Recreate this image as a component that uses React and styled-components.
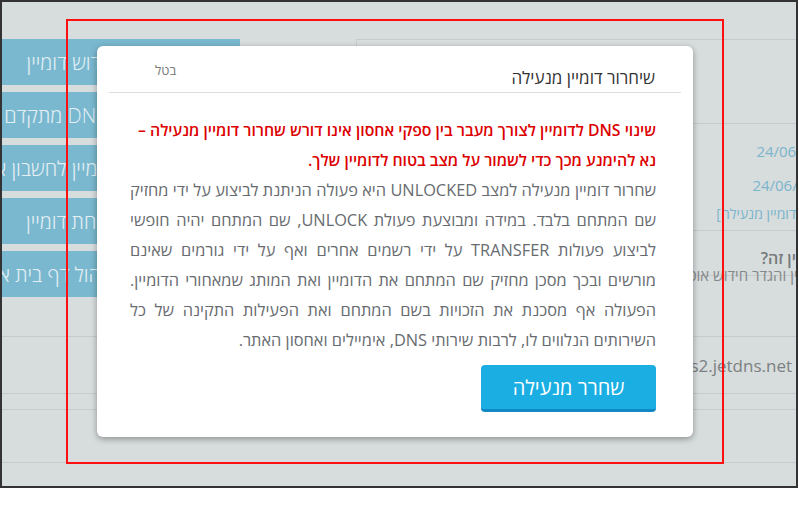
import styled, { createGlobalStyle } from 'styled-components'

const GlobalStyle = createGlobalStyle`
    body {
        margin: 0;
        background: #fff;
        font-family: "Open Sans", "Liberation Sans", sans-serif;
    }
`

const Frame = styled.div`
    position: relative;
    width: 798px;
    height: 488px;
    box-sizing: border-box;
    border: 2px solid #333;
    background: #d7dcdc;
    overflow: hidden;
`
const Page = styled.div`
    padding-top: 37px;
    direction: ltr;
`
const Upper = styled.div`
    display: flex;
    height: 297px;
`
const Sidebar = styled.div`
    width: 300px;
    margin-left: -62px;
    display: flex;
    flex-direction: column;
    gap: 7px;
    flex-shrink: 0;
`
const SideButton = styled.div`
    height: 46px;
    box-sizing: border-box;
    padding-right: ${p => p.$shift * 2}px;
    background: #79b8cf;
    color: #e3eff3;
    font-size: 20px;
    font-weight: 300;
    display: flex;
    align-items: center;
    justify-content: center;
    direction: rtl;
    white-space: nowrap;
`
const Panel = styled.div`
    margin-left: 116px;
    width: 540px;
    flex-shrink: 0;
    border-top: 1px solid #c6cccd;
    border-left: 1px solid #c6cccd;
    direction: rtl;
`
const PanelRow = styled.div`
    box-sizing: border-box;
    height: ${p => p.$h}px;
    border-bottom: ${p => (p.$last ? 'none' : '1px solid #c6cccd')};
    display: flex;
    flex-direction: column;
`
const DateText = styled.div`
    color: #7ab5cd;
    font-size: ${p => p.$size || 15}px;
    line-height: 20px;
    margin-top: ${p => p.$top}px;
    padding-right: ${p => p.$pad}px;
    white-space: nowrap;
`
const Question = styled.div`
    color: #75797b;
    font-size: 16px;
    font-weight: 600;
    line-height: 18px;
    margin-top: 18px;
    padding-right: 30px;
    white-space: nowrap;
`
const Hint = styled.div`
    color: #85898b;
    font-size: 15px;
    line-height: 16px;
    padding-right: 12px;
    white-space: nowrap;
`
const Lower = styled.div`
    display: flex;
    flex-direction: column;
`
const LineRow = styled.div`
    height: ${p => p.$h}px;
    border-top: 1px solid #c6cccd;
    display: flex;
    align-items: center;
    justify-content: flex-end;
    padding-right: 4px;
    color: #7c8082;
    font-size: 17px;
`

const Modal = styled.div`
    position: absolute;
    left: 95px;
    top: 44px;
    width: 596px;
    height: 391px;
    box-sizing: border-box;
    background: #fff;
    border-radius: 6px;
    box-shadow: 0 2px 6px rgba(0, 0, 0, 0.35);
    display: flex;
    flex-direction: column;
    direction: rtl;
`
const Header = styled.div`
    margin: 0 12px;
    height: 47px;
    box-sizing: border-box;
    border-bottom: 1px solid #dcdfe0;
    display: flex;
    justify-content: space-between;
    align-items: flex-start;
    padding: 0 26px 0 46px;
`
const Title = styled.div`
    margin-top: 20px;
    font-size: 17px;
    line-height: 24px;
    color: #333;
`
const Cancel = styled.div`
    margin-top: 15px;
    font-size: 13px;
    line-height: 18px;
    color: #7a7a7a;
`
const Content = styled.div`
    padding: 0 37px 0 33px;
    line-height: 30px;
`
const Warning = styled.p`
    margin: 22px 0 0;
    font-size: 15.8px;
    color: #dc0000;
    font-weight: 600;
`
const Info = styled.p`
    margin: 0;
    font-size: 16.35px;
    color: #676b70;
    text-align: justify;
`
const Footer = styled.div`
    margin-top: auto;
    padding: 0 37px 25px;
    display: flex;
`
const ReleaseButton = styled.button`
    width: 175px;
    height: 47px;
    border: none;
    border-bottom: 3px solid #1288c4;
    border-radius: 4px;
    background: #1aaee3;
    color: #fff;
    font-family: inherit;
    font-size: 20px;
    padding: 0;
`
const Highlight = styled.div`
    position: absolute;
    left: 64px;
    top: 17px;
    width: 658px;
    height: 445px;
    box-sizing: border-box;
    border: 2px solid #ff1010;
    pointer-events: none;
`

const menu = [
    { label: 'חידוש דומיין', shift: 18 },
    { label: 'ניהול DNS מתקדם', shift: 12 },
    { label: 'העברת דומיין לחשבון אחר', shift: 17 },
    { label: 'הקשחת דומיין', shift: 10 },
    { label: 'ניהול דף בית אישי', shift: 45 },
]

const App = () => {
    return (
        <>
            <GlobalStyle />
            <Frame>
                <Page>
                    <Upper>
                        <Sidebar>
                            {menu.map(item => (
                                <SideButton key={item.label} $shift={item.shift}>{item.label}</SideButton>
                            ))}
                        </Sidebar>
                        <Panel>
                            <PanelRow $h={84} />
                            <PanelRow $h={107}>
                                <DateText $top={17} $pad={61}>24/06/2025</DateText>
                                <DateText $top={14} $pad={65}>24/06/2026</DateText>
                                <DateText $top={9} $pad={41} $size={14}>[לשחרור הדומיין מנעילה]</DateText>
                            </PanelRow>
                            <PanelRow $h={45}>
                                <Question>חידוש דומיין זה?</Question>
                                <Hint>חדש את הדומיין והגדר חידוש אוטומטי</Hint>
                            </PanelRow>
                            <PanelRow $h={61} $last />
                        </Panel>
                    </Upper>
                    <Lower>
                        <LineRow $h={56}>ns2.jetdns.net</LineRow>
                        <LineRow $h={15} />
                        <LineRow $h={52} />
                        <LineRow $h={15} />
                    </Lower>
                </Page>
                <Modal>
                    <Header>
                        <Title>שיחרור דומיין מנעילה</Title>
                        <Cancel>בטל</Cancel>
                    </Header>
                    <Content>
                        <Warning>
                            שינוי DNS לדומיין לצורך מעבר בין ספקי אחסון אינו דורש שחרור דומיין מנעילה – נא להימנע מכך כדי לשמור על מצב בטוח לדומיין שלך.
                        </Warning>
                        <Info>
                            שחרור דומיין מנעילה למצב UNLOCKED היא פעולה הניתנת לביצוע על ידי מחזיק שם המתחם בלבד. במידה ומבוצעת פעולת UNLOCK, שם המתחם יהיה חופשי לביצוע פעולות TRANSFER על ידי רשמים אחרים ואף על ידי גורמים שאינם מורשים ובכך מסכן מחזיק שם המתחם את הדומיין ואת המותג שמאחורי הדומיין. הפעולה אף מסכנת את הזכויות בשם המתחם ואת הפעילות התקינה של כל השירותים הנלווים לו, לרבות שירותי DNS, אימיילים ואחסון האתר.
                        </Info>
                    </Content>
                    <Footer>
                        <ReleaseButton>שחרר מנעילה</ReleaseButton>
                    </Footer>
                </Modal>
                <Highlight />
            </Frame>
        </>
    )
}

export default App
